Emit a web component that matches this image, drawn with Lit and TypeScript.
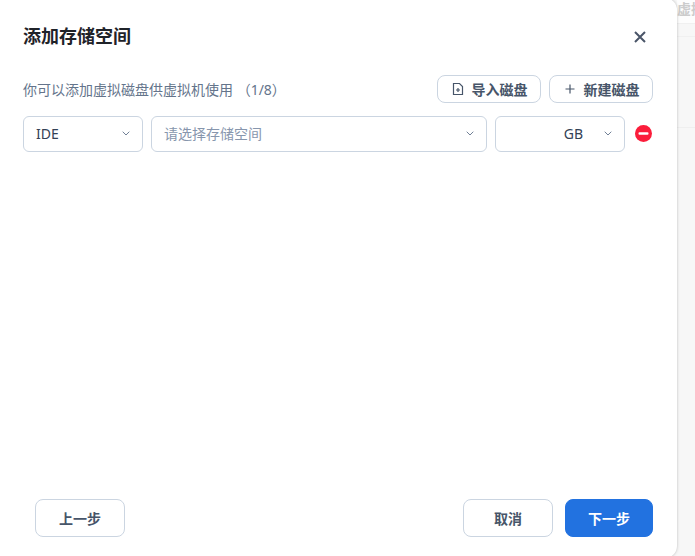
import { LitElement, html, css } from "lit";
import { customElement } from "lit/decorators.js";

const chevron = html`<svg class="chev" viewBox="0 0 8 5" width="8" height="5"><path d="M.7.7L4 4l3.3-3.3" fill="none" stroke="currentColor" stroke-width="1"/></svg>`;

@customElement("app-root")
export class AppRoot extends LitElement {
  static styles = css`
    :host {
      display: block;
      width: 695px;
      height: 556px;
      overflow: hidden;
      position: relative;
      background: #f7f7f7;
      font-family: "Noto Sans", "Noto Sans CJK SC", sans-serif;
    }
    .behind {
      position: absolute;
      left: 677px;
      top: 0;
      width: 18px;
      height: 128px;
      color: #cccccc;
      font-size: 14px;
      font-weight: 700;
      line-height: 18px;
      white-space: nowrap;
      overflow: hidden;
      box-sizing: border-box;
      border-bottom: 1px solid #efefef;
    }
    .band {
      height: 23px;
      background: #fdfdfd;
      border-bottom: 1px solid #f0f0f0;
    }
    .behind .rule {
      margin-top: 12px;
      border-top: 1px solid #f0f0f0;
    }
    .dialog {
      position: absolute;
      left: -10px;
      top: -2px;
      width: 687px;
      height: 560px;
      box-sizing: border-box;
      background: #fff;
      border-radius: 12px;
      box-shadow: 0 0 3px rgba(0, 0, 0, 0.25);
      padding: 2px 24px 21px 33px;
      display: flex;
      flex-direction: column;
    }
    .head {
      height: 75px;
      display: flex;
      align-items: center;
      justify-content: space-between;
      flex: none;
    }
    .head h2 {
      margin: 0 0 5px;
      font-size: 18px;
      font-weight: 700;
      color: #1f2329;
    }
    .close {
      width: 14px;
      height: 14px;
      margin: 0 6px 2px 0;
      color: #4a5568;
    }
    .tools {
      display: flex;
      align-items: center;
      justify-content: space-between;
      height: 28px;
      margin-bottom: 13px;
    }
    .hint {
      font-size: 14px;
      color: #64748b;
      padding-bottom: 1px;
    }
    .actions {
      display: flex;
      gap: 8px;
    }
    .btn {
      box-sizing: border-box;
      border: 1px solid #cbd5e1;
      border-radius: 8px;
      background: #fff;
      color: #475569;
      font: inherit;
      font-weight: 700;
      display: flex;
      align-items: center;
      justify-content: center;
    }
    .small {
      width: 104px;
      height: 28px;
      font-size: 14px;
      gap: 7px;
      padding: 0 0 1px;
    }
    .small svg {
      width: 14px;
      height: 14px;
    }
    .row {
      display: flex;
      align-items: center;
      gap: 8px;
    }
    .select {
      box-sizing: border-box;
      height: 36px;
      border: 1px solid #cbd5e1;
      border-radius: 6px;
      display: flex;
      align-items: center;
      justify-content: space-between;
      padding: 0 12px 2px;
      font-size: 14px;
      color: #334155;
    }
    .chev {
      color: #718096;
      flex: none;
    }
    .type { width: 120px; }
    .store { width: 336px; }
    .store span { color: #8796ad; }
    .size { width: 130px; }
    .size span { margin-left: auto; margin-right: 21px; }
    .minus {
      width: 17px;
      height: 17px;
      margin: 0 0 2px 2px;
    }
    .grow { flex: 1; }
    .foot {
      display: flex;
      justify-content: space-between;
      align-items: center;
      padding-left: 12px;
      flex: none;
    }
    .foot div { display: flex; gap: 12px; }
    .large {
      width: 90px;
      height: 38px;
      font-size: 14px;
      padding: 0;
    }
    .primary {
      width: 88px;
      background: #2272e0;
      border-color: #2272e0;
      color: #fff;
    }
  `;

  render() {
    return html`
      <div class="behind"><div class="band">虚拟</div><div class="rule"></div></div>
      <div class="dialog">
        <div class="head">
          <h2>添加存储空间</h2>
          <svg class="close" viewBox="0 0 14 14"><path d="M2 2l10 10M12 2L2 12" fill="none" stroke="currentColor" stroke-width="2"/></svg>
        </div>
        <div class="tools">
          <span class="hint">你可以添加虚拟磁盘供虚拟机使用 （1/8）</span>
          <div class="actions">
            <button class="btn small">
              <svg viewBox="0 0 14 14" fill="none" stroke="currentColor" stroke-width="1.2"><path d="M8.5 1.5H2.5v11h9V4.5zM5 8h4M7 6v4"/></svg>
              导入磁盘
            </button>
            <button class="btn small">
              <svg viewBox="0 0 14 14" fill="none" stroke="currentColor" stroke-width="1.2"><path d="M2.5 7h9M7 2.5v9"/></svg>
              新建磁盘
            </button>
          </div>
        </div>
        <div class="row">
          <div class="select type"><span>IDE</span>${chevron}</div>
          <div class="select store"><span>请选择存储空间</span>${chevron}</div>
          <div class="select size"><span>GB</span>${chevron}</div>
          <svg class="minus" viewBox="0 0 17 17"><circle cx="8.5" cy="8.5" r="8.5" fill="#fb1d3b"/><rect x="3.5" y="7.25" width="10" height="2.5" rx="1" fill="#fff"/></svg>
        </div>
        <div class="grow"></div>
        <div class="foot">
          <button class="btn large">上一步</button>
          <div>
            <button class="btn large">取消</button>
            <button class="btn large primary">下一步</button>
          </div>
        </div>
      </div>
    `;
  }
}
